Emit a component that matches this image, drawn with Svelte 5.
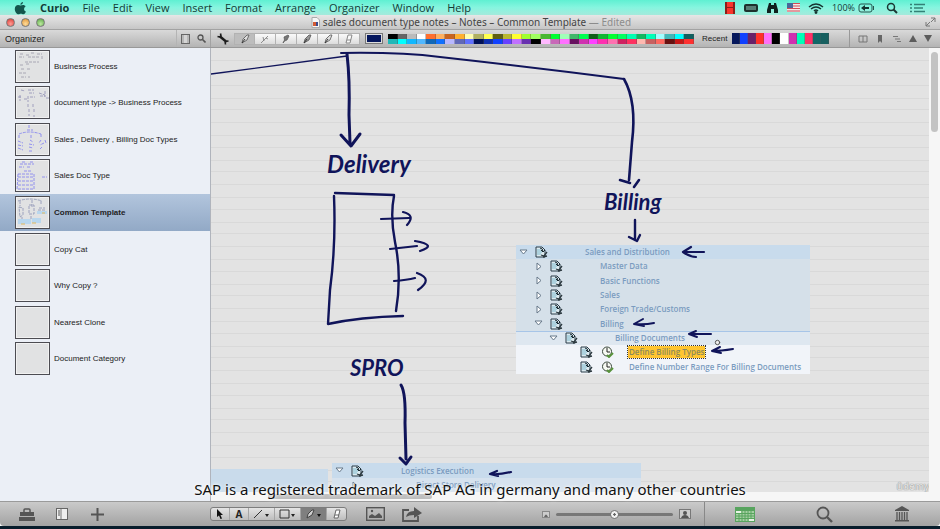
<script>
  const menus = ['File', 'Edit', 'View', 'Insert', 'Format', 'Arrange', 'Organizer', 'Window', 'Help'];

  const paletteTop = ['#000', '#666', '#bbb', '#fff', '#ff6f2e', '#ffb060', '#c8641e', '#ffb02e', '#ffffb0', '#b0b060', '#ffff50', '#606010', '#b8b830', '#ffff30', '#a0ff30', '#a0ff60', '#48b830', '#00ff30', '#a0ffb8', '#40b868', '#00ff50', '#106018', '#10b830', '#00ff30', '#00ff60', '#00ffb0', '#10b860', '#00ffb8', '#a0ffff', '#40b8b8', '#00ffff', '#106060'];
  const paletteBottom = ['#20b8b8', '#00ffff', '#10b8ff', '#50b8ff', '#1068b8', '#1070ff', '#b8b8ff', '#6068b8', '#6070ff', '#001058', '#1030b0', '#1040ff', '#6840ff', '#c070ff', '#6830b0', '#000', '#ffb8ff', '#c868b8', '#ff70ff', '#681060', '#d030b0', '#ff40ff', '#ff30b0', '#ff70b0', '#d02060', '#ff3060', '#ffb8b0', '#c86060', '#ff6860', '#681010', '#c81818', '#ff3030'];
  const recent = ['#06185c', '#1040ff', '#6a2068', '#ff3028', '#ff70f8', '#000', '#fff', '#d030b0', '#00ffb8', '#ff3068', '#106868', '#186060'];

  const pens = ['Pen', 'Pencil', 'Marker', 'Brush', 'Highlighter', 'Eraser'];

  const sheets = [
    { name: 'Business Process', ink: '#9a9aa8', art: 'M5 4h4m2 1h3m2 -2h4m2 1h5M4 7h5m4 0h12m2 -1v3M10 12h14M5 15h4m2 -1h4M6 19h4m2 0h3M4 23h8M6 27h5m2 0h2' },
    { name: 'document type -> Business Process', ink: '#8f8fb4', art: 'M6 4l4 1m3 -1h6M14 7h5M3 11h4m2 2h4m2 -2h5m5 -1h5m1 2h3M5 9v6m8 -5v6M13 18v3m5 -3v3m-4 2v3m5 -3v4m-5 1v2m5 -1v2M24 7l6 2M30 5v6' },
    { name: 'Sales , Delivery , Billing Doc Types', ink: '#7d7df0', art: 'M14 2v4M12 7h6M4 11q10 -4 22 0M4 12v4m12 -4v4m10 -5v4M3 18l5 2m-5 2l5 1m-5 2l5 2M15 17l3 2m-4 2l5 1m-5 2l4 1m-4 3h4M26 17l-2 3m5 0l-4 2m2 2l-2 2m5 -9l1 3' },
    { name: 'Sales Doc Type', ink: '#7d7df0', art: 'M7 3h4m4 0h3M5 5h14M4 8h5m3 0h4M9 12h8M3 15h16v15h-17zM3 18h16M3 22h16M3 26h16M27 18h5' },
    { name: 'Common Template', ink: '#8a93b4', art: 'M3 5q12 -4 24 0M5 5v5m12 -6v7m9 -6v4M4 11l4 1v7l-3 2zM14 9h5v9h-5zM24 12h6m-7 2h8M7 21v3m9 -4v4', selected: true },
    { name: 'Copy Cat' },
    { name: 'Why Copy ?' },
    { name: 'Nearest Clone' },
    { name: 'Document Category' }
  ];

  const nodes = [
    { text: 'Sales and Distribution', depth: 0, arrow: 'open', tone: 'head' },
    { text: 'Master Data', depth: 1, arrow: 'closed', tone: 'mid' },
    { text: 'Basic Functions', depth: 1, arrow: 'closed', tone: 'mid' },
    { text: 'Sales', depth: 1, arrow: 'closed', tone: 'mid' },
    { text: 'Foreign Trade/Customs', depth: 1, arrow: 'closed', tone: 'mid' },
    { text: 'Billing', depth: 1, arrow: 'open', tone: 'mid' },
    { text: 'Billing Documents', depth: 2, arrow: 'open', tone: 'sub' },
    { text: 'Define Billing Types', depth: 3, tone: 'leaf', marked: true },
    { text: 'Define Number Range For Billing Documents', depth: 3, tone: 'leaf' }
  ];
</script>

{#snippet docIcon()}
  <svg class="doc" width="13" height="12" viewBox="0 0 13 12">
    <path d="M1 1h6l3 3v7h-9z" fill="#dceaf0" stroke="#2b3d48" />
    <path d="M2 4h4M2 6h5M2 8h4" stroke="#7fb9cc" />
    <path d="M5 2q3 0 3 4M6 4l2 2 2-2" stroke="#182830" fill="none" />
    <path d="M6 9l3 1 3-4M8 11l4-1" stroke="#2d3a40" stroke-width="1.300" fill="none" />
  </svg>
{/snippet}

{#snippet twisty(kind)}
  <svg class="twisty" width="9" height="9" viewBox="0 0 9 9">
    {#if kind === 'open'}
      <path d="M1 2h7l-3.500 4z" fill="#fff" stroke="#667889" />
    {:else if kind === 'closed'}
      <path d="M3 1v7l4-3.500z" fill="#fff" stroke="#667889" />
    {/if}
  </svg>
{/snippet}

<div class="screen">
  <nav class="menubar" aria-label="Menu bar">
    <svg class="apple" width="13" height="14" viewBox="0 0 13 14">
      <path d="M9 1c0 1.500-1 2.700-2.600 2.800C6.300 2.400 7.500 1.200 9 1zM6.500 4.500C7.300 4.400 8 4 9 4c1.200 0 2.100.6 2.600 1.400-2.200 1.400-1.900 4.200.4 5.200-.6 1.400-1.500 2.700-2.600 2.700-.9 0-1.300-.5-2.500-.5s-1.500.5-2.400.5C2.400 13.300.8 10.400.8 8c0-2.500 1.600-4 3.300-4 1 0 1.700.5 2.400.5z" fill="#14564d" />
    </svg>
    <button class="app">Curio</button>
    {#each menus as item}
      <button>{item}</button>
    {/each}
    <div class="status">
      <svg width="12" height="12" viewBox="0 0 12 12"><path d="M1 0h10v12H1z" fill="#8b2019" /><path d="M3 0h6v5H3zM3 6h6v6H3z" fill="#f9352c" /></svg>
      <svg width="14" height="10" viewBox="0 0 14 10"><rect x="0" y="1" width="14" height="8" rx="2" fill="#1d302d" /><path d="M3 3v4M5 3v4M7 3v4M9 3v4M11 3v4" stroke="#92c8bd" /></svg>
      <svg width="13" height="12" viewBox="0 0 13 12"><path d="M3 1h2v2h3V1h2l2 7v3H8V7H5v4H1V8z" fill="#10201e" /></svg>
      <svg width="13" height="9" viewBox="0 0 13 9"><path fill="#f4e7e8" d="M0 0h13v9H0z" /><path d="M0 .5h13M0 3h13M0 5.500h13M0 8h13" stroke="#d24a55" /><path fill="#4a6699" d="M0 0h6v5H0z" /></svg>
      <svg width="16" height="12" viewBox="0 0 16 12" fill="none" stroke="#15332f" stroke-width="1.500"><path d="M1 5q7-6 14 0M3 7q5-4 10 0M6 9q2-2 4 0" /><circle cx="8" cy="10.500" r=".7" /></svg>
      <span>100%</span>
      <svg class="battery" width="17" height="10" viewBox="0 0 17 10"><rect x="1" y="1" width="13" height="8" rx="2" fill="none" stroke="#25564f" /><path d="M15 3v4h1V3z" fill="#25564f" /><path d="M3 5l4-3v2h4v2H7v2z" fill="#15332f" /></svg>
      <svg class="find" width="12" height="12" viewBox="0 0 12 12" fill="none" stroke="#1b3733"><circle cx="5" cy="5" r="3.500" stroke-width="1.500" /><path d="M7.500 7.500l3.500 3.500" stroke-width="2" /></svg>
      <svg class="list" width="16" height="10" viewBox="0 0 16 10"><path d="M0 1.500h2M4 1.500h11M0 5h2M4 5h9M0 8.500h2M4 8.500h11" stroke="#348176" stroke-width="1.500" /></svg>
    </div>
  </nav>

  <header class="titlebar">
    <div class="lights">
      <button class="red" aria-label="Close"></button>
      <button class="amber" aria-label="Minimise"></button>
      <button class="green" aria-label="Zoom"></button>
    </div>
    <h1>
      <svg width="9" height="11" viewBox="0 0 9 11"><path d="M1 .5h5l2.500 2.500v7.500H1z" fill="#f7f7f7" stroke="#aaa" /><path d="M2 5h3v4H2z" fill="#d35b35" /><path d="M5 5h2v4H5z" fill="#3b4a8c" /></svg>
      <span>sales document type notes – Notes – Common Template <em>— Edited</em></span>
    </h1>
    <button class="full" aria-label="Full screen">
      <svg width="11" height="10" viewBox="0 0 11 10" fill="none" stroke="#777"><path d="M6 1h4v4M10 1L6 5M5 9H1V5M1 9l4-4" /></svg>
    </button>
  </header>

  <div class="toolbar">
    <div class="organizer">
      <strong>Organizer</strong>
      <button aria-label="Toggle pane"><svg width="9" height="10" viewBox="0 0 9 10"><rect x=".5" y=".5" width="8" height="9" fill="#d5d5d5" stroke="#666" /><path d="M2 1v8M7 1v8" stroke="#999" /></svg></button>
      <button aria-label="Search organizer"><svg width="9" height="9" viewBox="0 0 9 9" fill="none" stroke="#555"><circle cx="3.500" cy="3.500" r="2.500" stroke-width="1.300" /><path d="M5.500 5.500l3 3" stroke-width="1.600" /></svg></button>
    </div>
    <button class="wrench" aria-label="Tools">
      <svg width="12" height="12" viewBox="0 0 12 12"><path d="M3 3.500l6 5" stroke="#1c1c1c" stroke-width="2.400" /><path d="M.5 3.500l2 .5 1.500-1L3.500.500M11.500 8l-2 .2-1.300 1.300.3 2" stroke="#1c1c1c" stroke-width="1.600" fill="none" /></svg>
    </button>
    <div class="pens">
      {#each pens as pen, i}
        <button class:on={i === 0} aria-label={pen}>
          <svg width="10" height="10" viewBox="0 0 10 10">
            {#if i === 5}
              <path d="M4 1h4L6 9H2z" fill="#fafafa" stroke="#888" /><path d="M3 6h4" stroke="#888" />
            {:else if i === 1}
              <path d="M1 9L8 2M3 3l1 4M6 4l2 1" stroke="#777" stroke-width=".8" fill="none" />
            {:else if i === 2}
              <path d="M2 9l1.500-3L3 3l4-2 1 1-2 4-2.500 1z" fill="#777" stroke="#555" stroke-width=".7" />
            {:else}
              <path d="M2 9l1-4 4-4h2L7 6z" fill={i === 3 ? '#999' : '#ddd'} stroke="#555" stroke-width=".8" /><path d="M2 9l3-4" stroke="#333" />
            {/if}
          </svg>
        </button>
      {/each}
    </div>
    <button class="well" aria-label="Ink colour"></button>
    <div class="palette">
      {#each [...paletteTop, ...paletteBottom] as c}
        <i style:background={c}></i>
      {/each}
    </div>
    <span class="recent-label">Recent</span>
    <div class="recent">
      {#each recent as c}
        <i style:background={c}></i>
      {/each}
    </div>
    <div class="pager">
      <button aria-label="Book"><svg width="10" height="8" viewBox="0 0 10 8" fill="none" stroke="#777"><path d="M1 1h8v6H1zM5 1v6" /></svg></button>
      <button aria-label="Bookmark"><svg width="10" height="8" viewBox="0 0 10 8"><path d="M3 0h4v8L5 6 3 8z" fill="#666" /></svg></button>
      <button aria-label="Outline"><svg width="10" height="8" viewBox="0 0 10 8"><path d="M1 1.500h5M3 4h5M5 6.500h4" stroke="#777" /></svg></button>
      <button aria-label="Previous"><svg width="8" height="7" viewBox="0 0 8 7"><path d="M4 0l4 7H0z" fill="#5c5c5c" /></svg></button>
      <button aria-label="Next"><svg width="8" height="7" viewBox="0 0 8 7"><path d="M4 7l4-7H0z" fill="#5c5c5c" /></svg></button>
    </div>
  </div>

  <main>
    <aside>
      <ul>
        {#each sheets as s}
          <li class:selected={s.selected}>
            <a href="#sheet">
              <svg class="thumb" width="35" height="33" viewBox="0 0 35 33">
                <rect x=".5" y=".5" width="34" height="32" fill="#e1e2e3" stroke="#4c4c52" />
                <rect x="1.500" y="1.500" width="32" height="30" fill="none" stroke="#f1f1f1" />
                {#if s.art}<path d={s.art} stroke={s.ink} fill="none" stroke-width=".8" stroke-dasharray="3 1" />{/if}
                {#if s.selected}
                  <path d="M22 15h10v3H22zM3 23h13v5H3zM17 22h9v5h-9z" fill="#b9d7ee" /><path d="M27 17h3M6 28h4m7 -1h4" stroke="#e2b85c" />
                {/if}
              </svg>
              <span>{s.name}</span>
            </a>
          </li>
        {/each}
      </ul>
    </aside>

    <section class="canvas">
      <div class="paper">
        <div class="strip"></div>

        <div class="tree sales">
          {#each nodes as n}
            <div class="node {n.tone} d{n.depth}">
              {@render twisty(n.arrow)}
              {@render docIcon()}
              {#if n.depth === 3}
                <svg class="clock" width="13" height="12" viewBox="0 0 13 12"><circle cx="6" cy="5.500" r="4.500" fill="#f7faf3" stroke="#39463a" /><path d="M6 2v4h3" stroke="#222" fill="none" /><path d="M6 9l2 2 4-4" stroke="#58923b" stroke-width="2" fill="none" /></svg>
              {/if}
              <span class:marked={n.marked}>{n.text}</span>
            </div>
          {/each}
        </div>

        <div class="tree logistics">
          <div class="node head d0">{@render twisty('open')}{@render docIcon()}<span>Logistics Execution</span></div>
          <div class="node pale d1">{@render twisty('closed')}<span>Direct Store Delivery</span></div>
        </div>

        <svg class="ink" width="718" height="444" viewBox="211 48 718 444" fill="none" stroke="#10145a" stroke-width="3" stroke-linecap="round" stroke-linejoin="round">
          <path d="M211 74Q280 65 347 56" stroke-width="1.300" />
          <path d="M341 53Q400 52 440 57Q530 67 624 79" stroke-width="2" />
          <path d="M347 54Q350 80 349 115L350 143M341 135L351 146L360 134" />
          <path d="M624 79Q637 102 632 142L629 180M620 180L630 183M639 180L634 187" stroke-width="2.600" />
          <path d="M335 193L394 195M334 196Q336 245 330 290L328 324Q360 317 403 316M394 196Q390 216 395 242Q402 275 396 311" stroke-width="2.400" />
          <path d="M381 219L409 218M403 212Q416 215 407 225M390 249L417 246M415 241Q438 245 420 251M394 281Q407 280 415 278M417 273Q434 279 418 290" stroke-width="2.200" />
          <path d="M401 385Q406 393 405 423L406 459M400 458L406 464L411 457" />
          <path d="M635 220V240M629 237L637 241L640 235" stroke-width="2.400" />
          <path d="M704 252H683L691 247M683 252Q690 257 696 257" stroke-width="2.200" />
          <path d="M654 323Q645 325 634 324L643 319M634 324L644 326" stroke-width="2" />
          <path d="M711 334H689L696 331M689 334L697 337" stroke-width="2" />
          <path d="M733 349Q721 351 712 351L720 347M712 351L721 353" stroke-width="2" />
          <path d="M511 472Q499 475 490 474L497 471M490 474L498 476" stroke-width="2.200" />
          <circle cx="717.500" cy="342.500" r="2.200" fill="#eee" stroke="#555" stroke-width="1" />
        </svg>

        <span class="hand delivery">Delivery</span>
        <span class="hand billing">Billing</span>
        <span class="hand spro">SPRO</span>
        <span class="mark">ûdemy</span>
      </div>
      <div class="vscroll"><i></i></div>
      <div class="hscroll"><i></i></div>
    </section>
  </main>

  <p class="caption">SAP is a registered trademark of SAP AG in germany and many other countries</p>

  <footer>
    <div class="left">
      <button aria-label="Briefcase"><svg width="16" height="13" viewBox="0 0 16 13"><path d="M5 4V2q0-1 1-1h4q1 0 1 1v2" stroke="#555" stroke-width="1.500" fill="none" /><path d="M1 4h14v4H1zM0 9h16v4H0z" fill="#555" /></svg></button>
      <button aria-label="Notebook"><svg width="12" height="12" viewBox="0 0 12 12"><rect x=".5" y=".5" width="11" height="11" fill="#eee" stroke="#666" /><path d="M5 1v10" stroke="#777" /><path d="M2 3h2M2 5h2M2 7h2" stroke="#555" /></svg></button>
      <button aria-label="Add"><svg width="13" height="13" viewBox="0 0 13 13"><path d="M6.500 0v13M0 6.500h13" stroke="#555" stroke-width="2" /></svg></button>
    </div>
    <div class="tools">
      <button aria-label="Select"><svg width="8" height="10" viewBox="0 0 8 10"><path d="M1 0l6 6H4.500L6 9.500 4.500 10 3 6.500 1 8z" fill="#111" /></svg></button>
      <button class="letter">A</button>
      <button class="wide" aria-label="Line"><svg width="17" height="10" viewBox="0 0 17 10"><path d="M1 9l8-8" stroke="#333" /><path d="M12 5h4l-2 3z" fill="#222" /></svg></button>
      <button class="wide" aria-label="Shape"><svg width="17" height="10" viewBox="0 0 17 10"><path d="M1 1h9v8H1z" stroke="#333" fill="none" /><path d="M12 5h4l-2 3z" fill="#222" /></svg></button>
      <button class="wide on" aria-label="Pen"><svg width="17" height="10" viewBox="0 0 17 10"><path d="M2 9l1-4 4-4h2L7 6z" fill="#ccc" stroke="#444" /><path d="M12 5h4l-2 3z" fill="#111" /></svg></button>
      <button aria-label="Eraser"><svg width="10" height="10" viewBox="0 0 10 10"><path d="M4 1h4L6 9H2z" fill="#fff" stroke="#666" /><path d="M3 6h4" stroke="#666" /></svg></button>
    </div>
    <button class="pic" aria-label="Image"><svg width="19" height="14" viewBox="0 0 19 14"><rect x=".7" y=".7" width="17.600" height="12.600" fill="none" stroke="#555" stroke-width="1.400" /><path d="M3 11V9l3-2 3 2 4-3 3 3v2z" fill="#555" /><circle cx="6" cy="4" r="1.200" fill="#555" /></svg></button>
    <button aria-label="Share"><svg width="20" height="15" viewBox="0 0 20 15"><path d="M7 3H1v11h15V9" fill="none" stroke="#555" stroke-width="1.800" /><path d="M4 10q1-6 8-6V0l8 6-8 5V8q-5 0-8 2z" fill="#555" /></svg></button>
    <div class="zoom">
      <svg width="8" height="7" viewBox="0 0 8 7"><rect x=".5" y=".5" width="7" height="6" fill="#ccc" stroke="#888" /><path d="M2 6q2-5 4 0z" fill="#666" /></svg>
      <input type="range" min="0" max="100" value="50" aria-label="Zoom" />
      <svg width="12" height="10" viewBox="0 0 12 10"><rect x=".5" y=".5" width="11" height="9" fill="#ccc" stroke="#777" /><path d="M2 9q1-3 4-3t4 3z" fill="#555" /><circle cx="6" cy="4" r="2" fill="#555" /></svg>
    </div>
    <div class="right">
      <button aria-label="Calendar"><svg width="20" height="15" viewBox="0 0 20 15"><path d="M0 0h20v15H0z" fill="#58a45f" /><path d="M1 4h18v10H1z" fill="#a5cfa3" /><path d="M1 6.500h18M1 9h18M1 11.500h18M4 4v10M7 4v10M10 4v10M13 4v10M16 4v10" stroke="#58a45f" /><path d="M1 4h5v2H1zM14 12h5v2h-5z" fill="#e8f3e6" /></svg></button>
      <button aria-label="Find"><svg width="17" height="17" viewBox="0 0 17 17" fill="none" stroke="#555"><circle cx="7" cy="7" r="5.500" stroke-width="1.800" /><path d="M11 11l5 5" stroke-width="2.400" /></svg></button>
      <button aria-label="Library"><svg width="16" height="16" viewBox="0 0 16 16"><path d="M8 0l7 4v1H1V4zM1 14h14v1.500H1z" fill="#555" /><path d="M3 6v8M5.500 6v8M8 6v8M10.500 6v8M13 6v8" stroke="#555" stroke-width="1.300" /></svg></button>
    </div>
  </footer>
  <div class="desk"></div>
</div>

<style>
  :global(body) { margin: 0; }
  .screen {
    position: relative;
    display: flex;
    flex-direction: column;
    min-height: 100vh;
    overflow: hidden;
    font-family: 'Liberation Sans', sans-serif;
    font-size: 8px;
    color: #222;
  }
  svg { display: block; flex: none; }
  button {
    display: flex;
    align-items: center;
    justify-content: center;
    padding: 0;
    border: 0;
    background: none;
    font: inherit;
    color: inherit;
  }

  .menubar {
    display: flex;
    align-items: center;
    gap: 13px;
    height: 15px;
    padding: 0 14px;
    background: linear-gradient(#5ff0d2, #86f5df 50%, #a3eadb);
    font: 500 11px/15px 'Open Sans', sans-serif;
    color: #123b36;
  }
  .menubar .app { font-weight: 700; }
  .status {
    display: flex;
    align-items: center;
    gap: 8px;
    margin-left: auto;
    font-size: 9px;
  }
  .status span { margin-right: -5px; }
  .status .find { margin-left: 3px; }
  .status .list { margin-left: 4px; }

  .titlebar {
    display: flex;
    align-items: center;
    height: 15px;
    padding: 0 4px 0 6px;
    background: linear-gradient(#e6e6e6, #c6c6c6);
    border-bottom: 1px solid #a2a2a2;
    box-sizing: border-box;
  }
  .lights { display: flex; gap: 6px; flex: 1; }
  .lights button {
    width: 9px;
    height: 9px;
    border: 1px solid #777;
    border-radius: 50%;
  }
  .red { background: radial-gradient(circle at 50% 70%, #ff9c95, #d9362f); }
  .amber { background: radial-gradient(circle at 50% 70%, #ffdc9a, #dd9030); }
  .green { background: radial-gradient(circle at 50% 70%, #bdeaa0, #57a443); }
  h1 {
    display: flex;
    align-items: center;
    gap: 3px;
    margin: 0;
    font: 10px/14px 'Noto Sans', sans-serif;
    color: #444;
  }
  h1 em { font-style: normal; color: #8c8c8c; }
  .full { flex: 1; justify-content: flex-end; }

  .toolbar {
    display: flex;
    align-items: center;
    height: 18px;
    background: linear-gradient(#d9d9d9, #b4b4b4);
    border-bottom: 1px solid #989898;
    box-sizing: border-box;
  }
  .organizer {
    display: flex;
    align-items: center;
    align-self: stretch;
    width: 210px;
    border-right: 1px solid #a2a2a2;
  }
  .organizer strong {
    flex: 1;
    padding-left: 5px;
    font-size: 9px;
    font-weight: 400;
  }
  .organizer button {
    width: 17px;
    align-self: stretch;
    border-left: 1px solid #b4b4b4;
  }
  .organizer button:last-child { border: 0; }
  .wrench { width: 23px; }
  .pens { display: flex; }
  .pens button {
    width: 21px;
    height: 12px;
    box-sizing: border-box;
    border: 1px solid #b2b2b2;
    border-left-width: 0;
    background: linear-gradient(#fafafa, #dcdcdc);
  }
  .pens .on { background: #bdbdbd; border-left-width: 1px; }
  .well {
    width: 18px;
    height: 11px;
    margin: 0 5px 0 5px;
    border: 1px solid #777;
    background: #05175d;
    outline: 1px solid #ddd;
    outline-offset: -2px;
    box-sizing: border-box;
  }
  .palette {
    display: grid;
    grid-template-columns: repeat(32, 1fr);
    grid-auto-rows: 5px;
    width: 306px;
  }
  .palette i, .recent i { box-shadow: inset -1px 0 rgba(80, 80, 80, 0.35); }
  .recent-label { width: 24px; margin: 0 6px 0 8px; }
  .recent {
    display: grid;
    grid-template-columns: repeat(12, 1fr);
    width: 97px;
    height: 11px;
  }
  .pager {
    display: flex;
    align-items: center;
    justify-content: space-around;
    align-self: stretch;
    width: 82px;
    margin-left: auto;
    padding: 0 4px;
    border-left: 1px solid #999;
  }

  main { display: flex; flex: 1; }
  aside {
    width: 210px;
    border-right: 1px solid #b0b4bc;
    background: #ebeff6;
  }
  ul {
    display: grid;
    grid-template-rows: repeat(9, 1fr);
    height: 329px;
    margin: 0;
    padding: 0;
    list-style: none;
  }
  li { display: flex; }
  li a {
    display: flex;
    align-items: center;
    gap: 4px;
    flex: 1;
    padding-left: 15px;
    color: #222;
    text-decoration: none;
  }
  .selected { background: linear-gradient(#b2c5dd, #92a9c6); }
  .selected span { font-weight: 700; }

  .canvas {
    display: grid;
    grid-template-columns: 1fr 11px;
    grid-template-rows: 1fr 9px;
    flex: 1;
    background: #f6f6f6;
  }
  .paper {
    position: relative;
    overflow: hidden;
    background-color: #e3e3e3;
    background-image: linear-gradient(
      transparent 12px, #d9d9d9 12px, #d9d9d9 13px, transparent 13px,
      transparent 25px, #d9d9d9 25px, #d9d9d9 26px, transparent 26px,
      transparent 37px, #d9d9d9 37px, #d9d9d9 38px, transparent 38px,
      transparent 50px, #d9d9d9 50px, #d9d9d9 51px, transparent 51px,
      transparent 61px, #d9d9d9 61px);
    background-size: 100% 62px;
  }
  .vscroll { padding: 4px 2px; }
  .vscroll i {
    display: block;
    height: 80px;
    border-radius: 4px;
    background: #c3c3c3;
  }
  .hscroll { padding: 2px 57px; }
  .hscroll i {
    display: block;
    width: 164px;
    height: 5px;
    border-radius: 3px;
    background: #bdbdbd;
  }
  .ink { position: absolute; top: 0; left: 0; }
  .hand {
    position: absolute;
    font: italic 700 22px/24px Lato, sans-serif;
    color: #10145a;
  }
  .delivery { left: 116px; top: 104px; font-size: 24px; }
  .billing { left: 393px; top: 142px; }
  .spro { left: 139px; top: 308px; }
  .mark {
    position: absolute;
    right: 0;
    bottom: 0;
    font: 10px/12px 'Noto Sans', sans-serif;
    color: #e6e6e6;
    text-shadow: 0 0 1px #888, 0 0 1px #999;
  }
  .strip {
    position: absolute;
    left: 0;
    top: 421px;
    width: 117px;
    height: 23px;
    background: #c9dbeb;
  }
  .tree {
    position: absolute;
    display: grid;
    font: 600 8px/10px 'Open Sans', sans-serif;
    color: #7b9cc0;
  }
  .sales {
    left: 305px;
    top: 197px;
    width: 294px;
    height: 129px;
    grid-template-rows: repeat(9, 1fr);
  }
  .logistics {
    left: 121px;
    top: 415px;
    width: 309px;
    grid-template-rows: 15px 14px;
  }
  .node { display: flex; align-items: center; }
  .twisty { margin-right: 7px; }
  .doc { margin-right: 37px; }
  .d0 { padding-left: 3px; }
  .d1 { padding-left: 18px; }
  .d2 { padding-left: 33px; }
  .d3 { padding-left: 48px; }
  .d3 .doc { margin-right: 8px; }
  .clock { margin-right: 15px; }
  .pale span { margin-left: 50px; }
  .head { background: #c8dbec; }
  .mid { background: #d5e0e9; }
  .sub { background: #dee7f0; box-shadow: inset 0 1px #a7c5e8; }
  .leaf { background: #f1f4f9; }
  .pale { background: #d6e2ee; }
  .node span { white-space: nowrap; }
  .marked {
    outline: 1px dotted #333;
    outline-offset: 1px;
    background: #ffc530;
    box-shadow: 0 0 0 1px #ffc530;
    color: #8b8a5c;
  }

  .caption {
    position: absolute;
    left: 0;
    right: 0;
    bottom: 31px;
    margin: 0;
    text-align: center;
    font: 15px/18px 'Noto Sans', sans-serif;
    color: #111;
    text-shadow: 0 0 3px #fff, 0 0 5px #fff;
  }

  footer {
    display: flex;
    align-items: center;
    height: 25px;
    background: linear-gradient(#cacaca, #a2a2a2);
    border-top: 1px solid #9a9a9a;
    box-sizing: border-box;
    border-radius: 0 0 4px 4px;
  }
  .left {
    display: flex;
    gap: 19px;
    width: 191px;
    padding-left: 19px;
  }
  .left button { width: 16px; }
  .tools {
    display: flex;
    height: 14px;
    border: 1px solid #7d7d7d;
    border-radius: 3px;
    box-sizing: border-box;
    background: linear-gradient(#e4e4e4, #bdbdbd);
  }
  .tools button { width: 19px; border-right: 1px solid #a5a5a5; box-sizing: border-box; }
  .tools button:last-child { border: 0; }
  .tools .wide { width: 26px; }
  .tools .on { background: #7f7f7f; }
  .letter { font: 700 10px/12px 'Noto Sans', sans-serif; }
  .pic { margin: 0 17px 0 19px; }
  .zoom {
    display: flex;
    align-items: center;
    gap: 6px;
    margin-left: auto;
    padding-right: 13px;
  }
  input {
    width: 117px;
    height: 12px;
    margin: 0;
    appearance: none;
    background: none;
  }
  input::-webkit-slider-runnable-track {
    height: 3px;
    border-radius: 2px;
    background: #777;
  }
  input::-webkit-slider-thumb {
    appearance: none;
    width: 9px;
    height: 9px;
    margin-top: -3px;
    border: 1px solid #777;
    border-radius: 50%;
    background: radial-gradient(#666 20%, #f2f2f2 30%);
  }
  .right {
    display: flex;
    justify-content: space-around;
    align-self: stretch;
    width: 235px;
    border-left: 1px solid #888;
  }
  .desk { height: 3px; background: #071c2b; }
</style>
